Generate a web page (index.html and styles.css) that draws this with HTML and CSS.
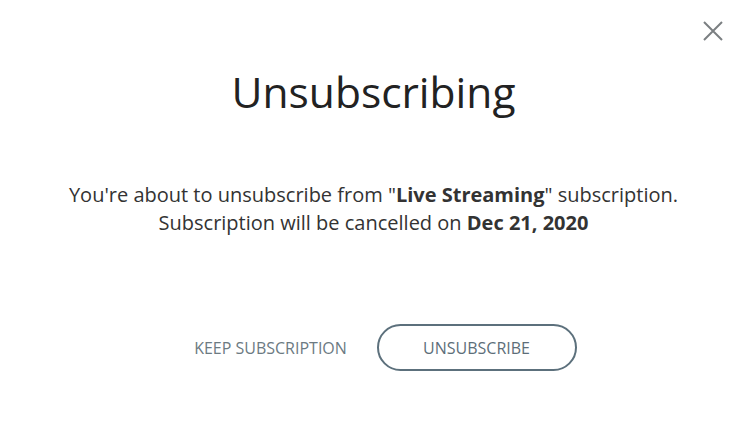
FILE: index.html
```html
<!DOCTYPE html>
<html>
<head>
<meta charset="utf-8">
<link rel="stylesheet" href="styles.css">
</head>
<body>
<div class="modal">
  <button class="close" aria-label="Close">
    <svg width="20" height="20" viewBox="0 0 20 20"><path d="M1 1L19 19M19 1L1 19" stroke="#7b7f82" stroke-width="2" fill="none"/></svg>
  </button>
  <h1 class="title">Unsubscribing</h1>
  <p class="message">You're about to unsubscribe from "<b>Live Streaming</b>" subscription.<br>Subscription will be cancelled on <b>Dec 21, 2020</b></p>
  <div class="actions">
    <button class="btn-link">KEEP SUBSCRIPTION</button>
    <button class="btn-outline">UNSUBSCRIBE</button>
  </div>
</div>
</body>
</html>
```
FILE: styles.css
```css
html, body {
  margin: 0;
  padding: 0;
  background: #fff;
}
body {
  font-family: "Open Sans", "Liberation Sans", sans-serif;
  color: #222;
}
.modal {
  position: relative;
  width: 745px;
  height: 434px;
  display: flex;
  flex-direction: column;
  align-items: center;
  box-sizing: border-box;
  padding-top: 62px;
  padding-left: 2px;
}
.close {
  position: absolute;
  top: 21px;
  right: 22px;
  background: none;
  border: 0;
  padding: 0;
  width: 20px;
  height: 20px;
  cursor: pointer;
}
.close svg { display: block; }
.title {
  margin: 0;
  font-size: 42.5px;
  font-weight: 400;
  line-height: 60px;
  color: #222;
}
.message {
  margin: 59px 0 0;
  font-size: 20px;
  line-height: 28px;
  text-align: center;
  color: #333;
}
.message b { font-weight: 700; }
.actions {
  margin-top: 87px;
  display: flex;
  align-items: center;
  gap: 6px;
}
.btn-link {
  width: 200px;
  height: 47px;
  background: none;
  border: 0;
  padding: 0;
  font-family: inherit;
  font-size: 16px;
  color: #6c7a82;
  cursor: pointer;
}
.btn-outline {
  width: 200px;
  height: 47px;
  box-sizing: border-box;
  border: 2px solid #5c707c;
  border-radius: 24px;
  background: #fff;
  font-family: inherit;
  font-size: 16px;
  color: #5d6e79;
  cursor: pointer;
}
```
